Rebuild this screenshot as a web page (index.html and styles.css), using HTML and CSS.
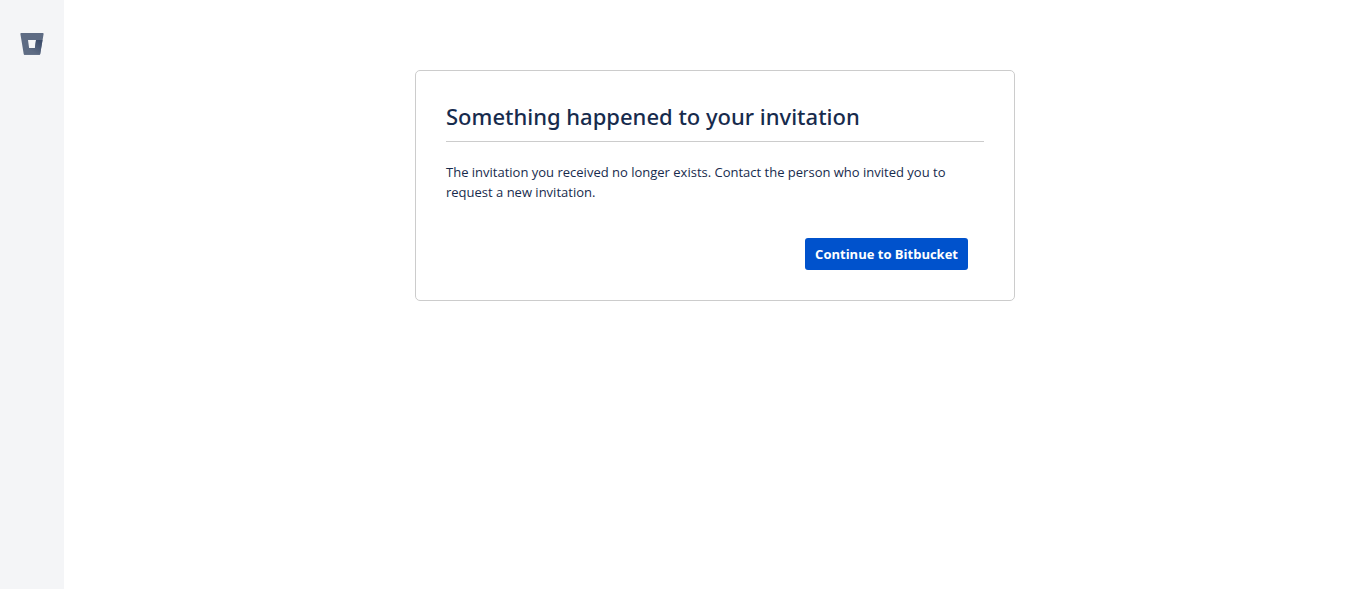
FILE: index.html
```html
<!DOCTYPE html>
<html lang="en">
<head>
<meta charset="utf-8">
<meta name="viewport" content="width=device-width, initial-scale=1">
<title>Something happened to your invitation</title>
<link rel="stylesheet" href="styles.css">
</head>
<body>
<div class="app">
  <nav class="rail" aria-label="Global">
    <a class="rail-logo" href="#" aria-label="Bitbucket">
      <svg width="24" height="24" viewBox="0 0 24 24" aria-hidden="true">
        <defs>
          <linearGradient id="shade" gradientUnits="userSpaceOnUse" x1="18" y1="8" x2="11" y2="19">
            <stop offset="0" stop-color="#3d4d6b"/>
            <stop offset="1" stop-color="#5e6c84"/>
          </linearGradient>
        </defs>
        <path fill="#5e6c84" d="M1.200 1A.8.8 0 0 0 .4 1.900L3.700 21.900a1.100 1.100 0 0 0 1.100.9H19.400a.8.8 0 0 0 .8-.7L23.600 1.900A.8.8 0 0 0 22.800 1ZM14.900 16H9.100L8 8H16Z"/>
        <path fill="url(#shade)" d="M22.500 8H16L14.900 16H9.100L4 22.500a1.100 1.100 0 0 0 .8.300H19.400a.8.8 0 0 0 .8-.7Z"/>
      </svg>
    </a>
  </nav>
  <main class="content">
    <section class="card">
      <h1 class="card-title">Something happened to your invitation</h1>
      <p class="card-text">The invitation you received no longer exists. Contact the person who invited you to request a new invitation.</p>
      <div class="card-actions">
        <a class="button" href="#">Continue to Bitbucket</a>
      </div>
    </section>
  </main>
</div>
</body>
</html>
```
FILE: styles.css
```css
* {
  box-sizing: border-box;
}

body {
  margin: 0;
  background: #fff;
  color: #172b4d;
  font: 13px/20px "Segoe UI", "Open Sans", "Noto Sans", sans-serif;
}

.app {
  display: flex;
  min-height: 100vh;
}

.rail {
  flex: none;
  width: 64px;
  padding-top: 32px;
  background: #f4f5f7;
}

.rail-logo {
  display: flex;
  justify-content: center;
}

.content {
  flex: 1;
  padding: 70px 20px;
}

.card {
  max-width: 600px;
  margin: 0 auto;
  padding: 30px;
  border: 1px solid #ccc;
  border-radius: 5px;
}

.card-title {
  margin: 0;
  padding-bottom: 10px;
  border-bottom: 1px solid #ccc;
  font-family: "Segoe UI", "Noto Sans", "Open Sans", sans-serif;
  font-size: 22px;
  font-weight: 500;
  line-height: 30px;
}

.card-text {
  margin: 20px 0 0;
}

.card-actions {
  display: flex;
  justify-content: flex-end;
  margin-top: 36px;
  padding-right: 16px;
}

.button {
  padding: 6px 10px;
  border-radius: 3px;
  background: #0052cc;
  color: #fff;
  font-weight: 700;
  text-decoration: none;
}
```
